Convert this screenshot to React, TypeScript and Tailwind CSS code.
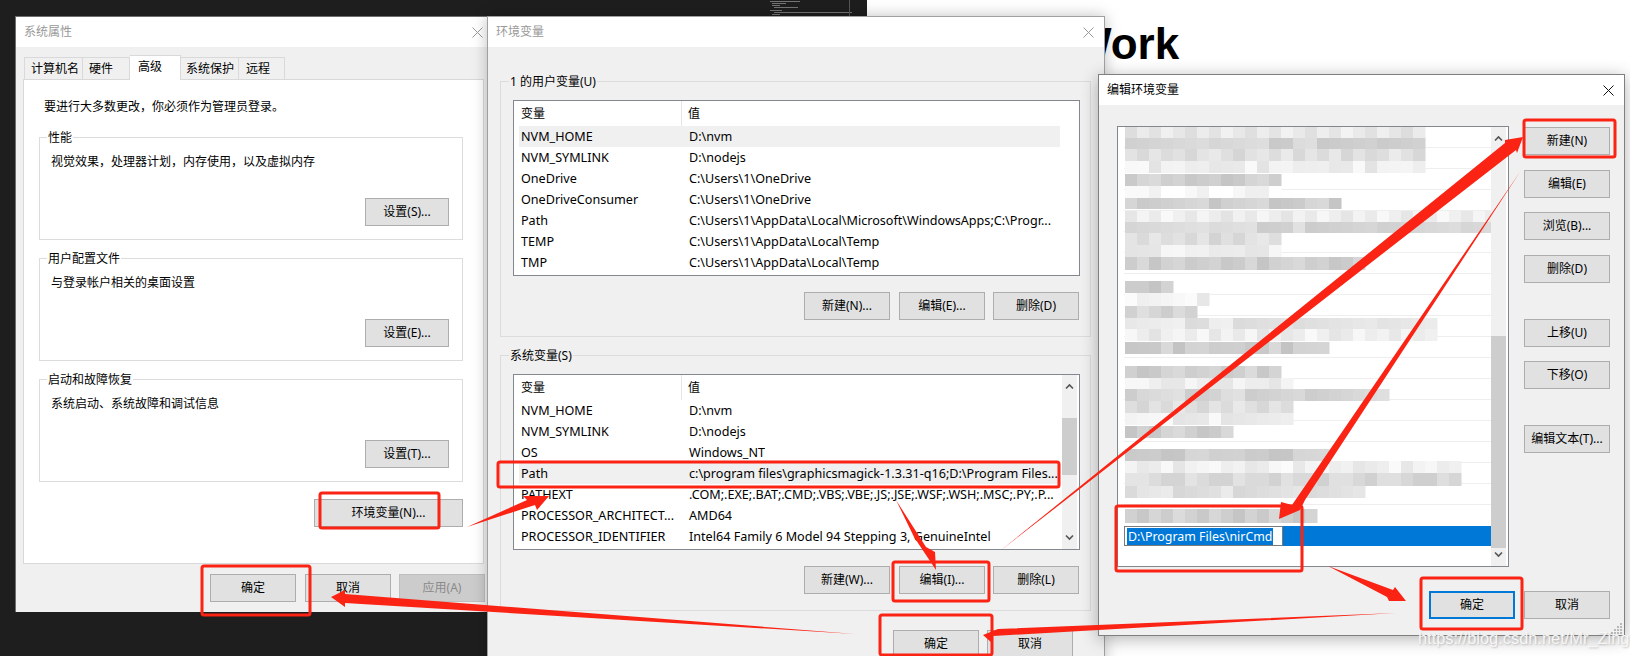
import React from "react";

const RED = "#fa2314";

function Btn({ label, className = "" }: { label: string; className?: string }) {
  return (
    <div className={"h-[28px] shrink-0 flex items-center justify-center border border-[#adadad] bg-[#e1e1e1] text-[12px] text-black whitespace-nowrap " + className}>
      {label}
    </div>
  );
}

function Close({ color }: { color: string }) {
  return (
    <svg width="11" height="11" viewBox="0 0 11 11" className="shrink-0">
      <path d="M0.5 0.5 L10.5 10.5 M10.5 0.5 L0.5 10.5" stroke={color} strokeWidth="1" fill="none" />
    </svg>
  );
}

function TitleBar({ title, dim, className = "" }: { title: string; dim?: boolean; className?: string }) {
  return (
    <div className={"shrink-0 bg-white flex items-center justify-between text-[12px] " + (dim ? "text-[#999999] " : "text-black ") + className}>
      <span>{title}</span>
      <Close color={dim ? "#999999" : "#111111"} />
    </div>
  );
}

function SysGroup({ title, desc, btn, className = "" }: { title: string; desc: string; btn: string; className?: string }) {
  return (
    <div className={"relative h-[103px] w-[424px] ml-[15px] border border-[#dcdcdc] pl-[11px] pr-[13px] pt-[15px] " + className}>
      <div className="absolute -top-[9px] left-[7px] bg-white px-[1px] text-[12px] leading-[18px] text-black">{title}</div>
      <div className="text-[12px] leading-[18px] text-black">{desc}</div>
      <div className="mt-[27px] flex justify-end">
        <Btn label={btn} className="w-[84px]" />
      </div>
    </div>
  );
}

function Chevron({ up }: { up?: boolean }) {
  return (
    <svg width="9" height="7" viewBox="0 0 9 7">
      <path d={up ? "M1 5.5 L4.5 2 L8 5.5" : "M1 1.5 L4.5 5 L8 1.5"} stroke="#555555" strokeWidth="1.6" fill="none" />
    </svg>
  );
}

function VarList({ rows, hi, scroll }: { rows: [string, string][]; hi: number; scroll?: boolean }) {
  return (
    <div className="relative h-[176px] w-[567px] border border-[#828790] bg-white pl-[5px] overflow-hidden">
      <div className="w-[541px] h-[25px] flex text-[12px] leading-[25px] text-black">
        <div className="w-[163px] pl-[2px] border-r border-[#e5e5e5]">变量</div>
        <div className="pl-[6px]">值</div>
      </div>
      {rows.map((r, i) => (
        <div key={r[0]} className={"w-[541px] h-[21px] flex text-[12.6px] leading-[21px] text-black whitespace-nowrap " + (i === hi ? "bg-[#f0f0f0]" : "")}>
          <div className="w-[163px] pl-[2px] overflow-hidden">{r[0]}</div>
          <div className="pl-[7px] overflow-hidden">{r[1]}</div>
        </div>
      ))}
      {scroll && (
        <div className="absolute right-[2px] top-0 bottom-0 w-[15px] bg-[#f0f0f0] flex flex-col items-center justify-between py-[8px]">
          <Chevron up />
          <div className="absolute left-0 right-0 top-[43px] h-[57px] bg-[#cdcdcd]" />
          <Chevron />
        </div>
      )}
    </div>
  );
}

const userRows: [string, string][] = [
  ["NVM_HOME", "D:\\nvm"],
  ["NVM_SYMLINK", "D:\\nodejs"],
  ["OneDrive", "C:\\Users\\1\\OneDrive"],
  ["OneDriveConsumer", "C:\\Users\\1\\OneDrive"],
  ["Path", "C:\\Users\\1\\AppData\\Local\\Microsoft\\WindowsApps;C:\\Progr..."],
  ["TEMP", "C:\\Users\\1\\AppData\\Local\\Temp"],
  ["TMP", "C:\\Users\\1\\AppData\\Local\\Temp"],
];
const sysRows: [string, string][] = [
  ["NVM_HOME", "D:\\nvm"],
  ["NVM_SYMLINK", "D:\\nodejs"],
  ["OS", "Windows_NT"],
  ["Path", "c:\\program files\\graphicsmagick-1.3.31-q16;D:\\Program Files..."],
  ["PATHEXT", ".COM;.EXE;.BAT;.CMD;.VBS;.VBE;.JS;.JSE;.WSF;.WSH;.MSC;.PY;.P..."],
  ["PROCESSOR_ARCHITECT...", "AMD64"],
  ["PROCESSOR_IDENTIFIER", "Intel64 Family 6 Model 94 Stepping 3, GenuineIntel"],
];

function VarGroup({ title, rows, hi, scroll, btns, className = "" }: { title: string; rows: [string, string][]; hi: number; scroll?: boolean; btns: string[]; className?: string }) {
  return (
    <div className={"relative h-[256px] w-[591px] border border-[#dcdcdc] pl-[12px] pt-[18px] " + className}>
      <div className="absolute -top-[9px] left-[8px] bg-[#f0f0f0] px-[1px] text-[12px] leading-[18px] text-black">{title}</div>
      <VarList rows={rows} hi={hi} scroll={scroll} />
      <div className="mt-[16px] w-[566px] flex justify-end">
        <Btn label={btns[0]} className="w-[86px]" />
        <Btn label={btns[1]} className="w-[86px] ml-[9px]" />
        <Btn label={btns[2]} className="w-[86px] ml-[8px]" />
      </div>
    </div>
  );
}

// [top, height, right end, base tone] of every blurred band, in list coordinates
const bands: [number, number, number, number][] = [
  [0, 12, 296, 232], [12, 11, 296, 212], [23, 12, 296, 224], [35, 12, 296, 238],
  [48, 12, 152, 208], [60, 12, 152, 248], [72, 11, 212, 206], [85, 11, 362, 238],
  [96, 11, 372, 214], [107, 12, 152, 222], [119, 12, 152, 238], [131, 13, 236, 208],
  [155, 12, 43, 200], [167, 13, 73, 240], [180, 12, 68, 214], [192, 11, 307, 230],
  [203, 12, 307, 238], [216, 12, 200, 206], [240, 12, 152, 208], [252, 11, 164, 240],
  [263, 12, 259, 214], [275, 12, 164, 224], [287, 12, 164, 238], [300, 12, 104, 208],
  [323, 12, 200, 206], [335, 12, 331, 240], [347, 13, 331, 218], [360, 12, 236, 224],
  [383, 14, 186, 208],
];

function Mosaic() {
  const cells: React.ReactElement[] = [];
  bands.forEach((b, bi) => {
    for (let i = 0; i * 12 < b[2]; i++) {
      const n = ((i * 37 + bi * 53 + (i * bi) % 7 * 11) % 23) - 11;
      const v = Math.min(255, b[3] + n);
      cells.push(<rect key={bi + "-" + i} x={i * 12} y={b[0]} width="12.5" height={b[1]} fill={`rgb(${v},${v},${v})`} />);
    }
  });
  return (
    <svg width="372" height="400" className="absolute left-[7px] top-[-1px] blur-[0.5px]">
      {cells}
    </svg>
  );
}

function Grip() {
  const dots = [[9, 0], [6, 3], [9, 3], [3, 6], [6, 6], [9, 6], [0, 9], [3, 9], [6, 9], [9, 9]];
  return (
    <svg width="11" height="11" className="absolute right-[2px] bottom-[1px]">
      {dots.map((d, i) => (
        <rect key={i} x={d[0]} y={d[1]} width="2" height="2" fill="#b8b8b8" />
      ))}
    </svg>
  );
}

function EditWindow() {
  const side: [string, string][] = [
    ["新建(N)", ""],
    ["编辑(E)", "mt-[15px]"],
    ["浏览(B)...", "mt-[14px]"],
    ["删除(D)", "mt-[15px]"],
    ["上移(U)", "mt-[36px]"],
    ["下移(O)", "mt-[14px]"],
    ["编辑文本(T)...", "mt-[36px]"],
  ];
  return (
    <div className="absolute left-[1098px] top-[74px] w-[527px] h-[562px] border border-[#7f7f7f] bg-[#f0f0f0] flex flex-col shadow-[0_3px_16px_rgba(0,0,0,0.3)] z-30">
      <TitleBar title="编辑环境变量" className="h-[30px] pl-[8px] pr-[10px]" />
      <div className="flex-1 pl-[18px] pt-[21px] flex flex-col">
        <div className="flex">
          <div className="relative w-[392px] h-[441px] border border-[#828790] bg-white overflow-hidden">
            <div className="pl-[6px] w-[373px]">
              {Array.from({ length: 19 }).map((_, i) => (
                <div key={i} className={"h-[21px] " + (i === 18 ? "" : "border-b border-[#eeeeee]")} />
              ))}
              <div className="h-[20px] bg-[#0078d7] flex items-stretch">
                <div className="w-[159px] border border-[#7a7a7a] bg-white flex items-center pl-[2px]">
                  <span className="bg-[#0078d7] text-white text-[12.4px] leading-[17px] px-[1px] whitespace-nowrap">D:\Program Files\nirCmd</span>
                </div>
              </div>
            </div>
            <Mosaic />
            <div className="absolute right-[2px] top-0 bottom-0 w-[15px] bg-[#f0f0f0] flex flex-col items-center justify-between py-[8px]">
              <Chevron up />
              <div className="absolute left-0 right-0 top-[209px] h-[212px] bg-[#cdcdcd]" />
              <Chevron />
            </div>
          </div>
          <div className="ml-[15px] w-[86px] pt-[1px] flex flex-col">
            {side.map((s) => (
              <Btn key={s[0]} label={s[0]} className={"w-[86px] " + s[1]} />
            ))}
          </div>
        </div>
        <div className="mt-[24px] flex justify-start pl-[312px]">
          <Btn label="确定" className="w-[86px] !border-2 !border-[#0078d7]" />
          <Btn label="取消" className="w-[86px] ml-[9px]" />
        </div>
      </div>
      <Grip />
    </div>
  );
}

function Annotations() {
  const boxes = [
    [320, 493, 119, 35], [202, 566, 108, 49], [498, 462, 561, 25], [893, 562, 96, 39],
    [880, 615, 112, 40], [1524, 120, 91, 37], [1116, 506, 186, 65], [1421, 578, 101, 51],
  ];
  const arrows = [
    "467,527 527,500 523,496 549,496 537,510 535,505",
    "896,500 926,547 935,552 936,570 914,537",
    "1396,613 998,629 998,629 983,635 992,643 993,636",
    "855,634 345,594 345,590 331,597 345,607 345,603",
    "1000,551 1505,143 1505,140 1523,137 1517,153 1516,150",
    "1520,172 1305,500 1300,510 1279,519 1281,502 1292,505",
    "1328,566 1393,590 1395,587 1406,601 1389,601 1387,597",
  ];
  return (
    <svg width="1630" height="656" className="absolute left-0 top-0 z-40 pointer-events-none">
      {boxes.map((b, i) => (
        <rect key={i} x={b[0]} y={b[1]} width={b[2]} height={b[3]} rx="2" fill="none" stroke={RED} strokeWidth="3" />
      ))}
      {arrows.map((p, i) => (
        <polygon key={i} points={p} fill={RED} />
      ))}
    </svg>
  );
}

function CodeScrap() {
  const lines = [
    [770, 1, 30], [772, 3, 14], [772, 5, 8], [774, 7, 24], [770, 10, 12], [774, 12, 78], [772, 14, 8],
  ];
  return (
    <svg width="100" height="16" viewBox="765 0 100 16" className="absolute left-[765px] top-0">
      {lines.map((l, i) => (
        <rect key={i} x={l[0]} y={l[1]} width={l[2]} height="1" fill="#9a9a9a" opacity="0.7" />
      ))}
      <rect x="849" y="0" width="1" height="16" fill="#555555" />
    </svg>
  );
}

export default function App() {
  return (
    <div className="relative w-[1630px] h-[656px] overflow-hidden bg-white [font-family:'Noto_Sans','Noto_Sans_CJK_SC',sans-serif]">
      <div className="absolute left-0 top-0 w-[867px] h-[656px] bg-[#1e1e1e]" />
      <CodeScrap />
      <div className="absolute left-[1070px] top-[22px] text-[44px] leading-[44px] font-bold text-black [font-family:'Liberation_Sans',sans-serif]">Work</div>

      {/* System properties */}
      <div className="absolute left-[15px] top-[16px] w-[473px] h-[596px] border-t border-l border-[#6e6e6e] bg-[#f0f0f0] flex flex-col z-10">
        <TitleBar title="系统属性" dim className="h-[30px] pl-[8px] pr-[5px]" />
        <div className="flex-1 pl-[7px] pt-[9px]">
          <div className="relative z-10 h-[24px] pl-[1px] flex items-end text-[12px] text-black -mb-[1px]">
            <div className="w-[59px] h-[23px] pl-[6px] border border-b-0 border-[#d9d9d9] flex items-center">计算机名</div>
            <div className="w-[47px] h-[23px] pl-[6px] border border-b-0 border-l-0 border-[#d9d9d9] flex items-center">硬件</div>
            <div className="w-[51px] h-[25px] pl-[8px] pb-[3px] border border-b-0 border-l-0 border-[#d9d9d9] bg-white flex items-center">高级</div>
            <div className="w-[58px] h-[23px] pl-[5px] border border-b-0 border-l-0 border-[#d9d9d9] flex items-center">系统保护</div>
            <div className="w-[46px] h-[23px] pl-[7px] border border-b-0 border-l-0 border-[#d9d9d9] flex items-center">远程</div>
          </div>
          <div className="w-[461px] h-[485px] border border-[#d9d9d9] bg-white pt-[18px]">
            <div className="pl-[20px] text-[12px] leading-[18px] text-black">要进行大多数更改，你必须作为管理员登录。</div>
            <SysGroup className="mt-[21px]" title="性能" desc="视觉效果，处理器计划，内存使用，以及虚拟内存" btn="设置(S)..." />
            <SysGroup className="mt-[18px]" title="用户配置文件" desc="与登录帐户相关的桌面设置" btn="设置(E)..." />
            <SysGroup className="mt-[18px]" title="启动和故障恢复" desc="系统启动、系统故障和调试信息" btn="设置(T)..." />
            <div className="mt-[17px] pr-[20px] flex justify-end">
              <Btn label="环境变量(N)..." className="w-[149px]" />
            </div>
          </div>
          <div className="mt-[10px] pl-[187px] flex">
            <Btn label="确定" className="w-[86px]" />
            <Btn label="取消" className="w-[86px] ml-[9px]" />
            <Btn label="应用(A)" className="w-[86px] ml-[8px] !bg-[#cccccc] !border-[#bfbfbf] !text-[#8a8a8a]" />
          </div>
        </div>
      </div>

      {/* Environment variables */}
      <div className="absolute left-[487px] top-[16px] w-[618px] h-[660px] border-t border-l border-r border-[#a0a0a0] bg-[#f0f0f0] flex flex-col shadow-[0_0_14px_rgba(0,0,0,0.25)] z-20">
        <TitleBar title="环境变量" dim className="h-[30px] pl-[8px] pr-[10px]" />
        <div className="flex-1 pl-[12px] pt-[34px]">
          <VarGroup title="1 的用户变量(U)" rows={userRows} hi={0} btns={["新建(N)...", "编辑(E)...", "删除(D)"]} />
          <VarGroup className="mt-[18px]" title="系统变量(S)" rows={sysRows} hi={3} scroll btns={["新建(W)...", "编辑(I)...", "删除(L)"]} />
          <div className="mt-[19px] pl-[393px] flex">
            <Btn label="确定" className="w-[86px]" />
            <Btn label="取消" className="w-[86px] ml-[8px]" />
          </div>
        </div>
      </div>

      <EditWindow />
      <Annotations />

      <div className="absolute left-[1418px] top-[627px] z-50 text-[16.4px] leading-[22px] text-[#f6f6f6] whitespace-nowrap [font-family:'Liberation_Sans',sans-serif] [text-shadow:1px_1px_2px_rgba(0,0,0,0.2)]">
        https://blog.csdn.net/Mr_Zing
      </div>
    </div>
  );
}
